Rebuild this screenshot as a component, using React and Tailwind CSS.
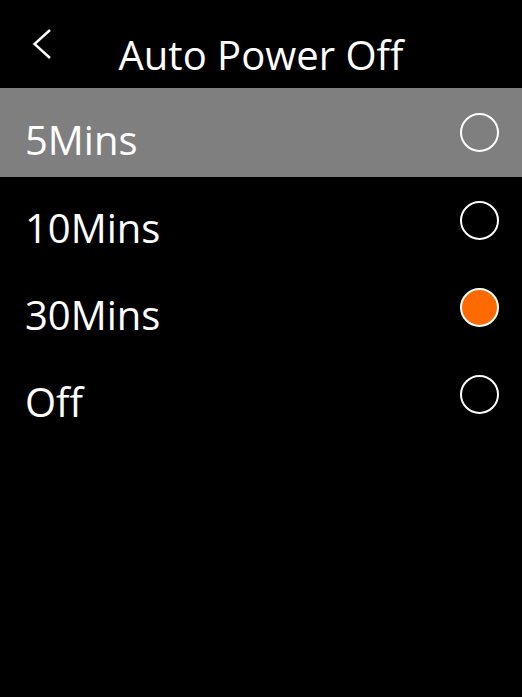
import React from "react";

const items = [
  { label: "5Mins", selected: false, highlight: true },
  { label: "10Mins", selected: false },
  { label: "30Mins", selected: true },
  { label: "Off", selected: false },
];

function Radio({ selected }) {
  return (
    <div
      className={
        "w-[39px] h-[39px] rounded-full border-[2.5px] border-white " +
        (selected ? "bg-[#ff6a00]" : "")
      }
    />
  );
}

export default function App() {
  return (
    <div
      className="w-[522px] h-[697px] bg-black text-white overflow-hidden"
      style={{ fontFamily: '"Open Sans", sans-serif' }}
    >
      <div className="h-[88px] grid grid-cols-[1fr_auto_1fr] items-start">
        <div className="pl-[32px] pt-[28px]">
          <svg width="20" height="32" viewBox="0 0 20 32" fill="none">
            <path d="M18 2 L2.5 16 L18 30" stroke="white" strokeWidth="2.4" />
          </svg>
        </div>
        <div className="text-[40px] leading-none pt-[35px]">Auto Power Off</div>
        <div />
      </div>
      <div className="flex flex-col">
        {items.map((it, i) => (
          <div
            key={it.label}
            className={
              "flex items-center justify-between pl-[25px] pr-[23px] " +
              (i === 0 ? "h-[89px] bg-[#7f7f7f]" : "h-[87px]")
            }
          >
            <span className="text-[40px] leading-none pt-[15px]">{it.label}</span>
            <Radio selected={it.selected} />
          </div>
        ))}
      </div>
    </div>
  );
}
